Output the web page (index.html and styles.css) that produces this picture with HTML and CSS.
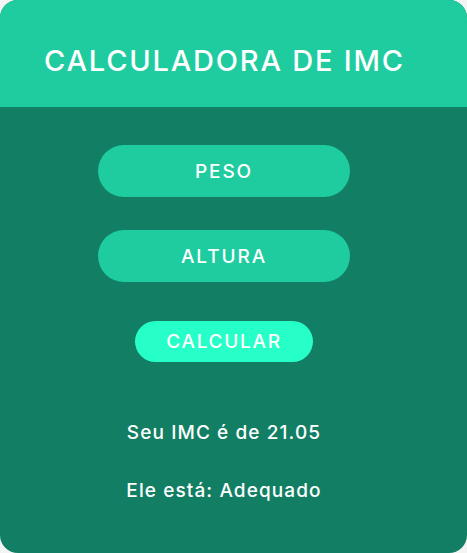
FILE: index.html
```html
<!DOCTYPE html>
<html lang="pt">
<head>
<meta charset="utf-8">
<link rel="stylesheet" href="styles.css">
</head>
<body>
<div class="card">
  <header class="header"><h1 class="title">CALCULADORA DE IMC</h1></header>
  <main class="content">
    <div class="field">PESO</div>
    <div class="field">ALTURA</div>
    <div class="calc">CALCULAR</div>
    <p class="result first">Seu IMC é de 21.05</p>
    <p class="result">Ele está: Adequado</p>
  </main>
</div>
</body>
</html>
```
FILE: styles.css
```css
html, body { margin: 0; padding: 0; background: #f4f4f4; }
body { font-family: "Inter", "Lato", sans-serif; }
.card {
  width: 467px; height: 553px; border-radius: 18px; overflow: hidden;
  background: #127f64; display: flex; flex-direction: column;
}
.header { height: 107px; background: #1fcc9f; display: flex; align-items: center; padding-left: 44px; box-sizing: border-box; }
.title { margin: 0; color: #fff; font-size: 29px; font-weight: 500; letter-spacing: 1.8px; padding-top: 14px; }
.content { display: flex; flex-direction: column; align-items: center; padding-right: 19px; padding-top: 38px; }
.field {
  width: 252px; height: 52px; border-radius: 26px; background: #1fcc9f; color: #fff;
  display: flex; align-items: center; justify-content: center; font-size: 19px; font-weight: 500; letter-spacing: 1.9px;
  padding-top: 1px; box-sizing: border-box;
}
.field + .field { margin-top: 33px; }
.calc {
  margin-top: 39px; width: 178px; height: 41px; border-radius: 21px; background: #26ffc7; color: #fff;
  display: flex; align-items: center; justify-content: center; font-size: 19px; font-weight: 500; letter-spacing: 1.7px;
}
.result { margin: 0; color: #fff; font-size: 19px; font-weight: 500; line-height: 24px; letter-spacing: 1.1px; }
.result.first { margin-top: 59px; }
.result + .result { margin-top: 34px; }
```
